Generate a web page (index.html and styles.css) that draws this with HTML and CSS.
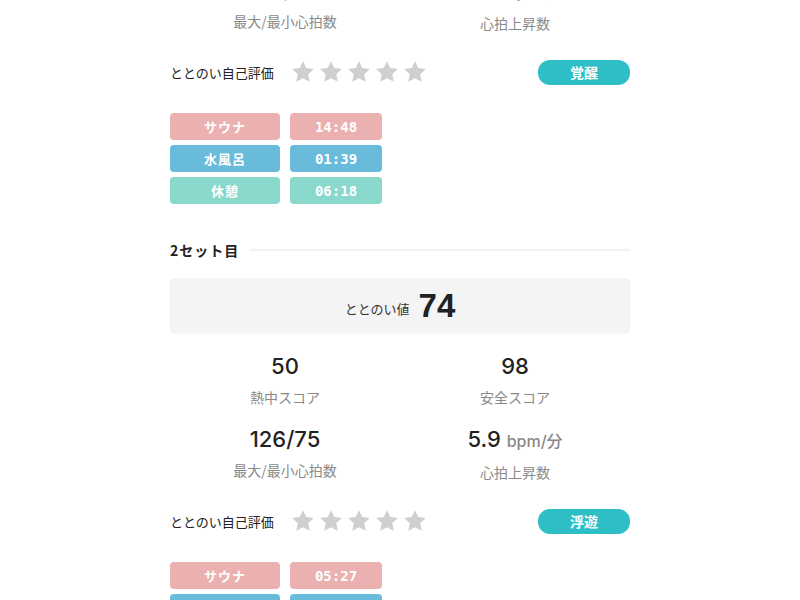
FILE: index.html
```html
<!DOCTYPE html>
<html lang="ja">
<head>
  <meta charset="UTF-8" />
  <meta name="viewport" content="width=device-width, initial-scale=1.0" />
  <title>サウナ記録</title>
  <link rel="stylesheet" href="styles.css">
</head>
<body>
  <div class="page">

    <section class="set">
      <div class="set-header"><h3>1セット目</h3><span class="rule"></span></div>
      <div class="score-box"><span class="score-label">ととのい値</span><span class="score-value">68</span></div>
      <div class="stats">
        <div class="stat"><div class="stat-value">46</div><div class="stat-label">熱中スコア</div></div>
        <div class="stat"><div class="stat-value">97</div><div class="stat-label">安全スコア</div></div>
        <div class="stat"><div class="stat-value">131/72</div><div class="stat-label">最大/最小心拍数</div></div>
        <div class="stat"><div class="stat-value">6.2 <span class="unit">bpm/分</span></div><div class="stat-label">心拍上昇数</div></div>
      </div>
      <div class="rating">
        <span class="rating-label">ととのい自己評価</span>
        <div class="stars">
          <svg viewBox="0 0 24 24"><path d="M12 1.2l3.3 6.9 7.5 1-5.5 5.2 1.4 7.5L12 18.2l-6.7 3.6 1.4-7.5-5.5-5.2 7.5-1z"/></svg>
          <svg viewBox="0 0 24 24"><path d="M12 1.2l3.3 6.9 7.5 1-5.5 5.2 1.4 7.5L12 18.2l-6.7 3.6 1.4-7.5-5.5-5.2 7.5-1z"/></svg>
          <svg viewBox="0 0 24 24"><path d="M12 1.2l3.3 6.9 7.5 1-5.5 5.2 1.4 7.5L12 18.2l-6.7 3.6 1.4-7.5-5.5-5.2 7.5-1z"/></svg>
          <svg viewBox="0 0 24 24"><path d="M12 1.2l3.3 6.9 7.5 1-5.5 5.2 1.4 7.5L12 18.2l-6.7 3.6 1.4-7.5-5.5-5.2 7.5-1z"/></svg>
          <svg viewBox="0 0 24 24"><path d="M12 1.2l3.3 6.9 7.5 1-5.5 5.2 1.4 7.5L12 18.2l-6.7 3.6 1.4-7.5-5.5-5.2 7.5-1z"/></svg>
        </div>
        <span class="mood">覚醒</span>
      </div>
      <div class="segments">
        <div class="seg sauna">サウナ</div><div class="seg sauna time">14:48</div>
        <div class="seg water">水風呂</div><div class="seg water time">01:39</div>
        <div class="seg rest">休憩</div><div class="seg rest time">06:18</div>
      </div>
    </section>

    <section class="set">
      <div class="set-header"><h3>2セット目</h3><span class="rule"></span></div>
      <div class="score-box"><span class="score-label">ととのい値</span><span class="score-value">74</span></div>
      <div class="stats">
        <div class="stat"><div class="stat-value">50</div><div class="stat-label">熱中スコア</div></div>
        <div class="stat"><div class="stat-value">98</div><div class="stat-label">安全スコア</div></div>
        <div class="stat"><div class="stat-value">126/75</div><div class="stat-label">最大/最小心拍数</div></div>
        <div class="stat"><div class="stat-value">5.9 <span class="unit">bpm/分</span></div><div class="stat-label">心拍上昇数</div></div>
      </div>
      <div class="rating">
        <span class="rating-label">ととのい自己評価</span>
        <div class="stars">
          <svg viewBox="0 0 24 24"><path d="M12 1.2l3.3 6.9 7.5 1-5.5 5.2 1.4 7.5L12 18.2l-6.7 3.6 1.4-7.5-5.5-5.2 7.5-1z"/></svg>
          <svg viewBox="0 0 24 24"><path d="M12 1.2l3.3 6.9 7.5 1-5.5 5.2 1.4 7.5L12 18.2l-6.7 3.6 1.4-7.5-5.5-5.2 7.5-1z"/></svg>
          <svg viewBox="0 0 24 24"><path d="M12 1.2l3.3 6.9 7.5 1-5.5 5.2 1.4 7.5L12 18.2l-6.7 3.6 1.4-7.5-5.5-5.2 7.5-1z"/></svg>
          <svg viewBox="0 0 24 24"><path d="M12 1.2l3.3 6.9 7.5 1-5.5 5.2 1.4 7.5L12 18.2l-6.7 3.6 1.4-7.5-5.5-5.2 7.5-1z"/></svg>
          <svg viewBox="0 0 24 24"><path d="M12 1.2l3.3 6.9 7.5 1-5.5 5.2 1.4 7.5L12 18.2l-6.7 3.6 1.4-7.5-5.5-5.2 7.5-1z"/></svg>
        </div>
        <span class="mood">浮遊</span>
      </div>
      <div class="segments">
        <div class="seg sauna">サウナ</div><div class="seg sauna time">05:27</div>
        <div class="seg water">水風呂</div><div class="seg water time">01:12</div>
        <div class="seg rest">休憩</div><div class="seg rest time">07:40</div>
      </div>
    </section>

  </div>
</body>
</html>
```

FILE: styles.css
```css
html {
  overflow: hidden;
}
body {
  margin: 0;
  background: #fff;
  font-family: "Noto Sans CJK JP", "Noto Sans", sans-serif;
  color: #222;
}
/* page is shown scrolled partway down */
.page {
  width: 460px;
  margin: -209px auto 0;
}
.set {
  margin-bottom: 36px;
}
.set-header {
  display: flex;
  align-items: center;
  height: 20px;
}
.set-header h3 {
  margin: 0;
  font-size: 14px;
  font-weight: 700;
  letter-spacing: 1px;
  color: #222;
}
.set-header .rule {
  flex: 1;
  height: 2px;
  margin-left: 11px;
  background: #f2f2f2;
}
.score-box {
  margin-top: 18px;
  height: 55px;
  background: #f4f4f4;
  border-radius: 4px;
  display: flex;
  align-items: center;
  justify-content: center;
  box-shadow: 0 1px 2px rgba(0, 0, 0, 0.04);
}
.score-label {
  font-size: 13px;
  color: #333;
  margin-top: 6px;
}
.score-value {
  font-family: "Liberation Sans", sans-serif;
  font-size: 33px;
  font-weight: 700;
  margin-left: 9px;
  color: #222;
}
.stats {
  margin-top: 19px;
  display: grid;
  grid-template-columns: 1fr 1fr;
  row-gap: 18px;
  text-align: center;
}
.stat-value {
  font-family: Inter, "Liberation Sans", sans-serif;
  font-size: 22px;
  font-weight: 500;
  line-height: 28px;
  color: #222;
}
.stat-value .unit {
  font-size: 16px;
  color: #888;
  font-weight: 500;
  font-family: Inter, "Noto Sans CJK JP", sans-serif;
}
.stat-label {
  margin-top: 7px;
  font-size: 14px;
  line-height: 20px;
  color: #8a8a8a;
}
.rating {
  margin-top: 26px;
  height: 26px;
  display: flex;
  align-items: center;
}
.rating-label {
  font-size: 13px;
  color: #222;
}
.stars {
  display: flex;
  gap: 4px;
  margin-left: 17px;
}
.stars svg {
  width: 24px;
  height: 24px;
  fill: #cfcfcf;
}
.mood {
  margin-left: auto;
  width: 92px;
  height: 25px;
  line-height: 25px;
  border-radius: 12px;
  background: #2dbfc5;
  color: #fff;
  text-align: center;
  font-size: 14px;
  font-weight: 700;
}
.segments {
  margin-top: 28px;
  display: grid;
  grid-template-columns: 110px 92px;
  gap: 5px 10px;
}
.seg {
  height: 27px;
  border-radius: 4px;
  color: #fff;
  font-size: 13px;
  font-weight: 700;
  display: flex;
  align-items: center;
  justify-content: center;
  letter-spacing: 1px;
}
.seg.time {
  font-family: "DejaVu Sans Mono", monospace;
  font-size: 14px;
  letter-spacing: 0;
}
.sauna {
  background: #ebb1b0;
}
.water {
  background: #69bbdb;
}
.rest {
  background: #8ad7cc;
}
```
